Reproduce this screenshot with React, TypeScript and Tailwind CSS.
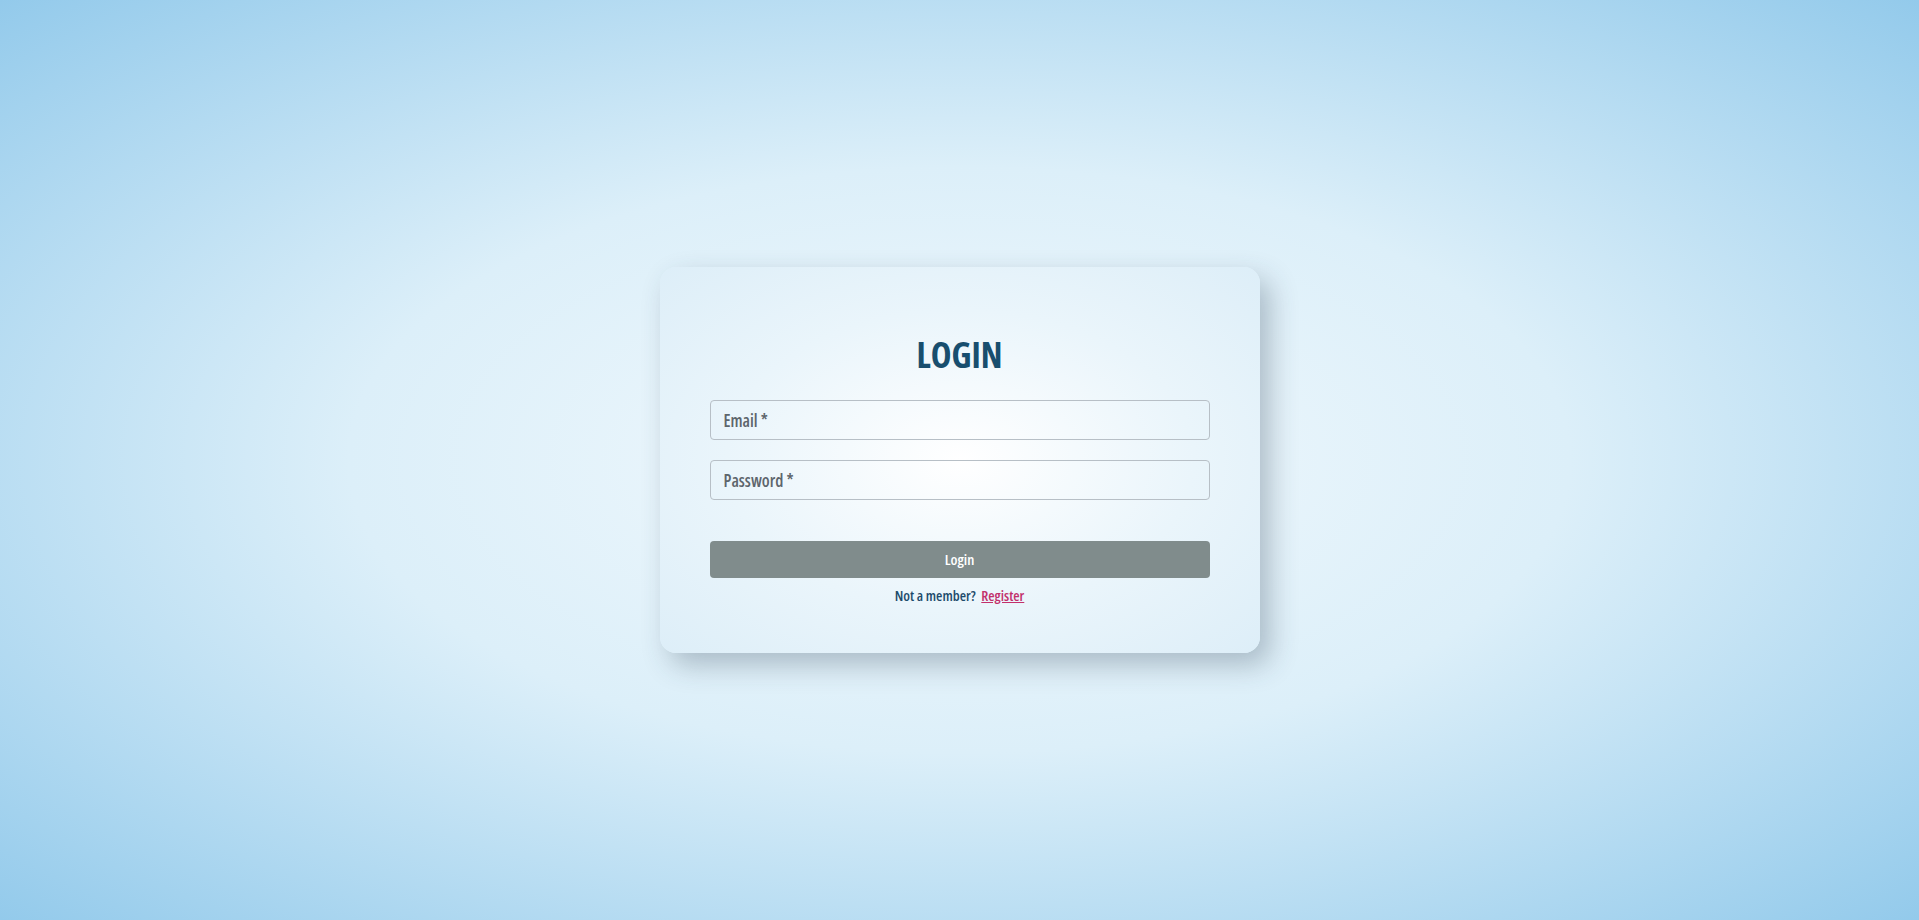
import React, { useState } from 'react';

export default function App() {
  const [email, setEmail] = useState('');
  const [password, setPassword] = useState('');

  return (
    <div className="w-full h-[920px] flex items-center justify-center bg-[radial-gradient(ellipse_at_center,#f2f9fd_0%,#dceff9_45%,#93caeb_100%)] font-['Open_Sans',sans-serif] font-stretch-[75%]">
      <div className="w-[600px] rounded-[16px] px-[50px] pt-[68px] pb-[47px] flex flex-col bg-[radial-gradient(ellipse_at_center,#ffffff_0%,#eaf5fb_55%,#ddeef8_100%)] shadow-[10px_12px_28px_rgba(40,60,80,0.3)]">
        <h1 className="text-center text-[35px] leading-[40px] font-bold text-[#184e6e]">LOGIN</h1>

        <form className="flex flex-col mt-[25px]" onSubmit={(e) => e.preventDefault()}>
          <input
            type="email"
            value={email}
            onChange={(e) => setEmail(e.target.value)}
            placeholder="Email *"
            className="h-[40px] w-full rounded-[4px] border border-[#b7bfc6] bg-transparent px-[13px] text-[17px] font-semibold font-stretch-[75%] text-[#3f4a52] placeholder:text-[#5d656c] outline-none"
          />
          <input
            type="password"
            value={password}
            onChange={(e) => setPassword(e.target.value)}
            placeholder="Password *"
            className="mt-[20px] h-[40px] w-full rounded-[4px] border border-[#b7bfc6] bg-transparent px-[13px] text-[17px] font-semibold font-stretch-[75%] text-[#3f4a52] placeholder:text-[#5d656c] outline-none"
          />
          <button
            type="submit"
            className="mt-[41px] h-[37px] w-full rounded-[4px] bg-[#808c8c] text-[15px] font-semibold font-stretch-[75%] text-white"
          >
            Login
          </button>
          <p className="mt-[8px] text-center text-[14.5px] leading-[20px] font-semibold text-[#1d4b6b]">
            Not a member?{' '}
            <a href="#" className="ml-[3px] text-[#c2306b] underline">Register</a>
          </p>
        </form>
      </div>
    </div>
  );
}
